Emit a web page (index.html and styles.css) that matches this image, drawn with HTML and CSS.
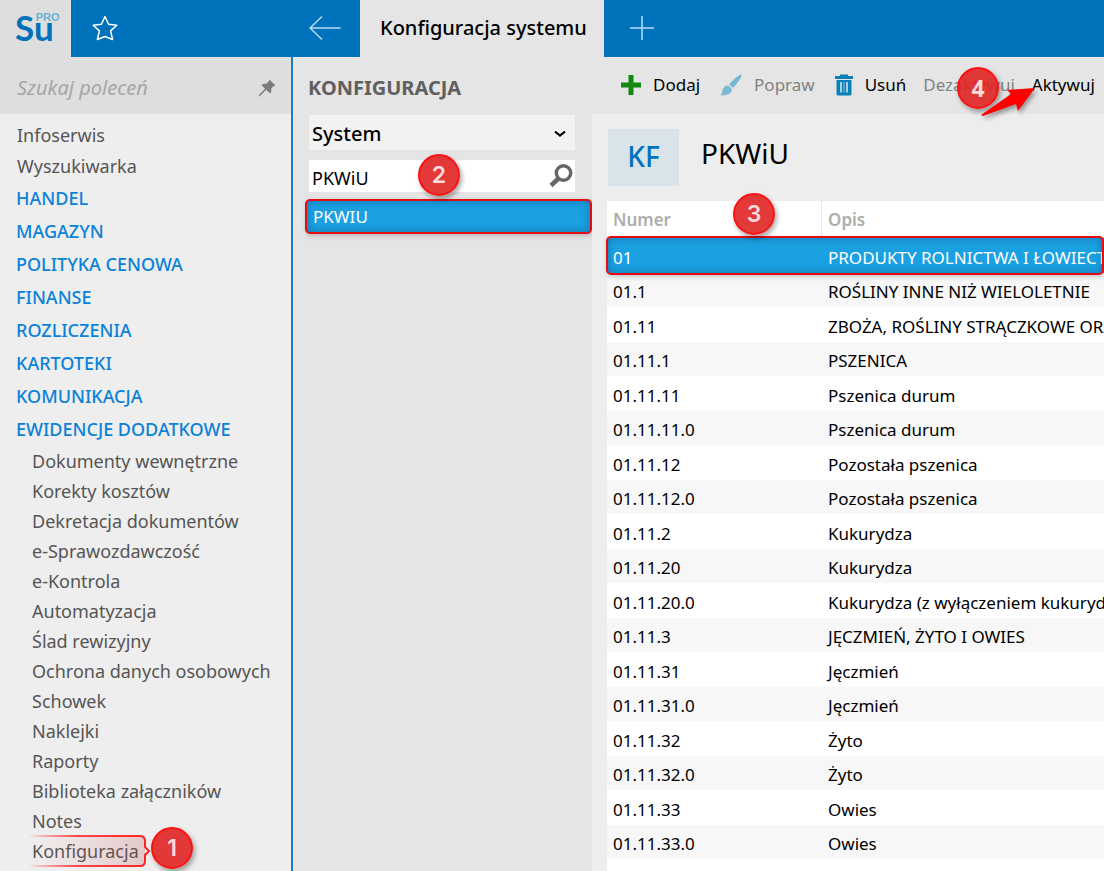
FILE: index.html
```html
<!DOCTYPE html>
<html lang="pl">
<head>
<meta charset="utf-8">
<meta name="viewport" content="width=device-width, initial-scale=1">
<title>Konfiguracja systemu</title>
<link rel="stylesheet" href="styles.css">
</head>
<body>
<div class="app">
  <header class="topbar">
    <a class="logo" href="#" aria-label="Su PRO"><span class="logo-main">Su</span><span class="logo-pro">PRO</span></a>
    <button class="top-btn star" aria-label="Ulubione">
      <svg width="28" height="28" viewBox="0 0 28 28"><path d="M14 2.500l3.600 7.800 8.200.9-6.200 5.700 2 8.600-7.600-3-7.600 3 2-8.600-6.200-5.700 8.200-.9z" fill="none" stroke="#fff" stroke-width="1.500" stroke-linejoin="round"/></svg>
    </button>
    <button class="top-btn back" aria-label="Wstecz">
      <svg width="32" height="26" viewBox="0 0 32 26"><path d="M1 13h30.500M13 1.500L1 13l12 11.500" fill="none" stroke="#b8dcf4" stroke-width="1.500"/></svg>
    </button>
    <button class="tab">Konfiguracja systemu</button>
    <button class="top-btn add" aria-label="Nowa karta">
      <svg width="26" height="26" viewBox="0 0 26 26"><path d="M13 1v24M1 13h24" stroke="#b8dcf4" stroke-width="1.500"/></svg>
    </button>
  </header>

  <aside class="sidebar">
    <div class="command-search">
      <input class="command-input" type="text" placeholder="Szukaj poleceń" aria-label="Szukaj poleceń">
      <button class="pin" aria-label="Przypnij">
        <svg width="18" height="18" viewBox="0 0 18 18"><path d="M11.500 0.500l6 6-1.800.6-2.500 2.500c.5 1.900.1 3.700-1.200 5L8.200 10.800 2 17l-1.500.500.500-1.500L7 9.700 3.400 6.100c1.400-1.400 3.200-1.700 5-1.300l2.500-2.500z" fill="#7c7c7c"/></svg>
      </button>
    </div>
    <nav class="menu">
      <a class="menu-top" href="#">Infoserwis</a>
      <a class="menu-top" href="#">Wyszukiwarka</a>
      <a class="menu-group" href="#">HANDEL</a>
      <a class="menu-group" href="#">MAGAZYN</a>
      <a class="menu-group" href="#">POLITYKA CENOWA</a>
      <a class="menu-group" href="#">FINANSE</a>
      <a class="menu-group" href="#">ROZLICZENIA</a>
      <a class="menu-group" href="#">KARTOTEKI</a>
      <a class="menu-group" href="#">KOMUNIKACJA</a>
      <a class="menu-group" href="#">EWIDENCJE DODATKOWE</a>
      <a class="menu-sub" href="#">Dokumenty wewnętrzne</a>
      <a class="menu-sub" href="#">Korekty kosztów</a>
      <a class="menu-sub" href="#">Dekretacja dokumentów</a>
      <a class="menu-sub" href="#">e-Sprawozdawczość</a>
      <a class="menu-sub" href="#">e-Kontrola</a>
      <a class="menu-sub" href="#">Automatyzacja</a>
      <a class="menu-sub" href="#">Ślad rewizyjny</a>
      <a class="menu-sub" href="#">Ochrona danych osobowych</a>
      <a class="menu-sub" href="#">Schowek</a>
      <a class="menu-sub" href="#">Naklejki</a>
      <a class="menu-sub" href="#">Raporty</a>
      <a class="menu-sub" href="#">Biblioteka załączników</a>
      <a class="menu-sub" href="#">Notes</a>
      <div class="menu-current">
        <a class="menu-sub" href="#">Konfiguracja</a>
        <svg class="bracket" width="126" height="36" viewBox="0 0 126 36">
          <defs>
            <linearGradient id="fade" gradientUnits="userSpaceOnUse" x1="0" x2="121" y1="0" y2="0"><stop offset="0" stop-color="#f00" stop-opacity="0"/><stop offset=".4" stop-color="#f22" stop-opacity=".8"/><stop offset="1" stop-color="#f22"/></linearGradient>
            <linearGradient id="tint" x1="0" x2="1"><stop offset="0" stop-color="#f66" stop-opacity="0"/><stop offset="1" stop-color="#a33" stop-opacity=".2"/></linearGradient>
          </defs>
          <path d="M0 3h112q5 0 5 5v20q0 5-5 5H0z" fill="url(#tint)"/>
          <path d="M0 3h112q5 0 5 5v6l4 4-4 4v6q0 5-5 5H0" fill="none" stroke="url(#fade)" stroke-width="2"/>
        </svg>
        <span class="badge badge-one">1</span>
      </div>
    </nav>
  </aside>

  <section class="config">
    <h2 class="config-title">KONFIGURACJA</h2>
    <div class="select-wrap">
      <select class="scope" aria-label="Zakres"><option>System</option></select>
      <svg class="chevron" width="12" height="8" viewBox="0 0 12 8"><path d="M1 1.500l5 4 5-4" fill="none" stroke="#000" stroke-width="2.200"/></svg>
    </div>
    <div class="filter">
      <input class="filter-input" type="text" value="PKWiU" aria-label="Szukaj w konfiguracji">
      <button class="filter-btn" aria-label="Szukaj">
        <svg width="24" height="24" viewBox="0 0 24 24"><circle cx="14.500" cy="9" r="7.200" fill="none" stroke="#666" stroke-width="3.400"/><path d="M9.500 14.500L2 21.500" stroke="#666" stroke-width="4.500"/></svg>
      </button>
      <span class="badge badge-two">2</span>
    </div>
    <a class="result" href="#">PKWIU</a>
  </section>

  <main class="content">
    <div class="toolbar">
      <button class="tool"><svg width="20" height="20" viewBox="0 0 20 20"><path d="M10 0v20M0 10h20" stroke="#128a12" stroke-width="5"/></svg>Dodaj</button>
      <button class="tool muted"><svg width="22" height="22" viewBox="0 0 22 22"><path d="M21.500.5C22.500 2.500 15.500 12 13 14L9 10.500C11 8 19 0 21.500.5zM8 11.500l3.800 3.500c.2 4-3.300 6.500-11.300 6.500C3 19.500 1.500 11.500 8 11.500z" fill="#78b8d2"/></svg>Popraw</button>
      <button class="tool"><svg width="18" height="22" viewBox="0 0 18 22"><path d="M0 2h5V.5h8V2h5v3H0zM1.500 6h15v14q0 1.500-1.500 1.500H3q-1.500 0-1.500-1.500z" fill="#0a80b8"/><path d="M6 8v10.500M12 8v10.500" stroke="#e5e5e5" stroke-width="1.500"/><path d="M9 8v10.500" stroke="#8cc3dc" stroke-width="1"/></svg>Usuń</button>
      <button class="tool muted">Dezaktywuj</button>
      <button class="tool">Aktywuj</button>
      <svg class="pointer" width="56" height="32" viewBox="0 0 56 32"><path d="M0 27L30 6l-4-4 28-2-17 23-2-7L2 28z" fill="#f00"/></svg>
      <span class="badge badge-four">4</span>
    </div>
    <div class="heading">
      <span class="tile">KF</span>
      <h1 class="title">PKWiU</h1>
    </div>
    <div class="grid">
      <table class="records">
        <thead><tr><th class="col-num">Numer</th><th class="col-desc">Opis</th></tr></thead>
        <tbody>
          <tr class="selected"><td>01</td><td>PRODUKTY ROLNICTWA I ŁOWIECTWA</td></tr>
          <tr><td>01.1</td><td>ROŚLINY INNE NIŻ WIELOLETNIE</td></tr>
          <tr><td>01.11</td><td>ZBOŻA, ROŚLINY STRĄCZKOWE ORAZ</td></tr>
          <tr><td>01.11.1</td><td>PSZENICA</td></tr>
          <tr><td>01.11.11</td><td>Pszenica durum</td></tr>
          <tr><td>01.11.11.0</td><td>Pszenica durum</td></tr>
          <tr><td>01.11.12</td><td>Pozostała pszenica</td></tr>
          <tr><td>01.11.12.0</td><td>Pozostała pszenica</td></tr>
          <tr><td>01.11.2</td><td>Kukurydza</td></tr>
          <tr><td>01.11.20</td><td>Kukurydza</td></tr>
          <tr><td>01.11.20.0</td><td>Kukurydza (z wyłączeniem kukurydzy</td></tr>
          <tr><td>01.11.3</td><td>JĘCZMIEŃ, ŻYTO I OWIES</td></tr>
          <tr><td>01.11.31</td><td>Jęczmień</td></tr>
          <tr><td>01.11.31.0</td><td>Jęczmień</td></tr>
          <tr><td>01.11.32</td><td>Żyto</td></tr>
          <tr><td>01.11.32.0</td><td>Żyto</td></tr>
          <tr><td>01.11.33</td><td>Owies</td></tr>
          <tr><td>01.11.33.0</td><td>Owies</td></tr>
        </tbody>
      </table>
      <span class="row-frame"></span>
      <span class="badge badge-three">3</span>
    </div>
  </main>
</div>
</body>
</html>
```
FILE: styles.css
```css
* { box-sizing: border-box; }
body {
  margin: 0;
  background: #e5e5e5;
  color: #000;
  font-family: "Noto Sans", "Open Sans", sans-serif;
  font-size: 17px;
}
button, input, select {
  font: inherit;
  color: inherit;
  border: 0;
  padding: 0;
  background: none;
  border-radius: 0;
}
button { cursor: pointer; }
a { color: inherit; text-decoration: none; }
svg { display: block; flex: none; }

.app {
  display: grid;
  grid-template-columns: 293px 299px minmax(0, 1fr);
  grid-template-rows: 57px 1fr;
  min-height: 100vh;
  overflow: hidden;
}

.topbar {
  grid-column: 1 / -1;
  display: flex;
  background: #0071bb;
}
.logo {
  display: flex;
  width: 71px;
  padding-left: 15px;
  background: #dedede;
  color: #0071bb;
}
.logo-main { font: 700 35px/54px Lato, sans-serif; }
.logo-pro { font: 700 11px/34px "Liberation Sans", sans-serif; color: #6caed8; margin-left: -18px; }
.top-btn { display: flex; align-items: center; justify-content: center; padding-bottom: 2px; }
.star { width: 68px; }
.back { width: 70px; margin-left: 151px; }
.tab {
  padding: 0 20px 2px;
  width: 244px;
  background: #e5e5e5;
  font-size: 20px;
  font-weight: 500;
  white-space: nowrap;
}
.add { width: 76px; }

.sidebar {
  background: #eee;
  border-right: 2px solid #1b7fc2;
}
.command-search {
  display: flex;
  align-items: center;
  gap: 8px;
  height: 57px;
  padding: 4px 15px 0 17px;
  background: #dedede;
}
.command-input {
  flex: 1;
  min-width: 0;
  font-size: 20px;
  font-style: italic;
}
.command-input::placeholder { color: #a6a6a6; opacity: 1; }
.menu {
  display: flex;
  flex-direction: column;
  padding-top: 6px;
  white-space: nowrap;
}
.menu-top {
  padding-left: 17px;
  color: #555;
  font-size: 18px;
  line-height: 31px;
}
.menu-group {
  padding-left: 16px;
  color: #0a82d8;
  font-size: 18px;
  font-weight: 500;
  line-height: 33px;
}
.menu-sub {
  padding-left: 32px;
  color: #555;
  font-size: 18px;
  line-height: 30px;
}
.menu-current { position: relative; display: flex; }
.bracket { position: absolute; left: 28px; top: -3px; pointer-events: none; }

.badge {
  position: absolute;
  width: 42px;
  height: 42px;
  border: 2px solid #fb1212;
  border-radius: 50%;
  background: rgba(224, 36, 36, .9);
  box-shadow: 2px 3px 5px rgba(0, 0, 0, .35);
  color: #fbdcdc;
  font: 600 23px/38px Inter, sans-serif;
  text-align: center;
}
.badge-one { left: 151px; top: -9px; }
.badge-two { left: 109px; top: -6px; }
.badge-three { left: 126px; top: -8px; }
.badge-four { left: 365px; top: 10px; font-family: "Open Sans", sans-serif; font-weight: 700; }

.config { padding: 0 0 0 15px; }
.config-title {
  margin: 0;
  padding-top: 3px;
  color: #606060;
  font-size: 20px;
  font-weight: 700;
  line-height: 55px;
}
.select-wrap, .filter { position: relative; margin: 0 17px 10px 1px; }
.scope {
  appearance: none;
  display: block;
  width: 100%;
  height: 35px;
  padding: 2px 32px 0 3px;
  background: #f2f2f2;
  font-size: 20px;
  font-weight: 500;
}
.chevron { position: absolute; right: 9px; top: 15px; pointer-events: none; }
.filter {
  display: flex;
  height: 32px;
  margin-bottom: 7px;
  padding: 0 2px 0 3px;
  background: #fff;
  align-items: center;
}
.filter-input { flex: 1; min-width: 0; padding-top: 3px; font-size: 18px; }
.result {
  display: block;
  height: 35px;
  margin-left: -3px;
  padding-left: 6px;
  border: 2px solid #e60c14;
  border-radius: 5px;
  background: #1ba1e2;
  box-shadow: inset 0 0 8px rgba(0, 40, 80, .35), 1px 2px 5px rgba(0, 0, 0, .2);
  color: #fff;
  font-size: 17px;
  line-height: 31px;
}

.content {
  display: flex;
  flex-direction: column;
  min-width: 0;
  background: #ededed;
}
.toolbar {
  position: relative;
  display: flex;
  align-items: center;
  height: 57px;
  padding: 0 0 2px 26px;
  gap: 17px;
  background: #e5e5e5;
  white-space: nowrap;
}
.tool { display: flex; align-items: center; gap: 12px; font-size: 17px; }
.tool svg { margin-left: 3px; }
.muted { color: #828282; }
.pointer { position: absolute; left: 389px; top: 31px; z-index: 1; filter: drop-shadow(2px 3px 2px rgba(0, 0, 0, .35)); }
.heading {
  display: flex;
  gap: 22px;
  padding: 15px 15px 15px 16px;
}
.tile {
  width: 71px;
  height: 57px;
  background: #d8e3ea;
  color: #0071bb;
  font-size: 28px;
  font-weight: 500;
  line-height: 55px;
  text-align: center;
}
.title { margin: 0; font-size: 28px; font-weight: 400; line-height: 48px; }

.grid {
  position: relative;
  flex: 1;
  margin-left: 15px;
  background: #fff;
}
.records {
  width: 100%;
  table-layout: fixed;
  border-collapse: separate;
  border-spacing: 0;
}
.records th {
  height: 37px;
  padding: 0 6px;
  border-bottom: 1px solid #ccc;
  color: #adadad;
  font-size: 17px;
  font-weight: 600;
  text-align: left;
}
.records .col-num { width: 215px; border-right: 1px dotted #ccc; }
.records td {
  height: 34px;
  padding: 3px 0 0 6px;
  font-size: 17px;
  line-height: 31px;
  white-space: nowrap;
  overflow: hidden;
}
.records tr:nth-child(odd) td { height: 35px; }
.records tr:nth-child(even) td { background: #f7f7f7; }
.records .selected td { background: #1ba1e2; color: #fff; }
.row-frame {
  position: absolute;
  left: -1px;
  right: 0;
  top: 35px;
  height: 39px;
  border: 2px solid #e60c14;
  border-radius: 5px;
  box-shadow: inset 0 0 8px rgba(0, 40, 80, .35), 1px 2px 5px rgba(0, 0, 0, .2);
  pointer-events: none;
}
```
